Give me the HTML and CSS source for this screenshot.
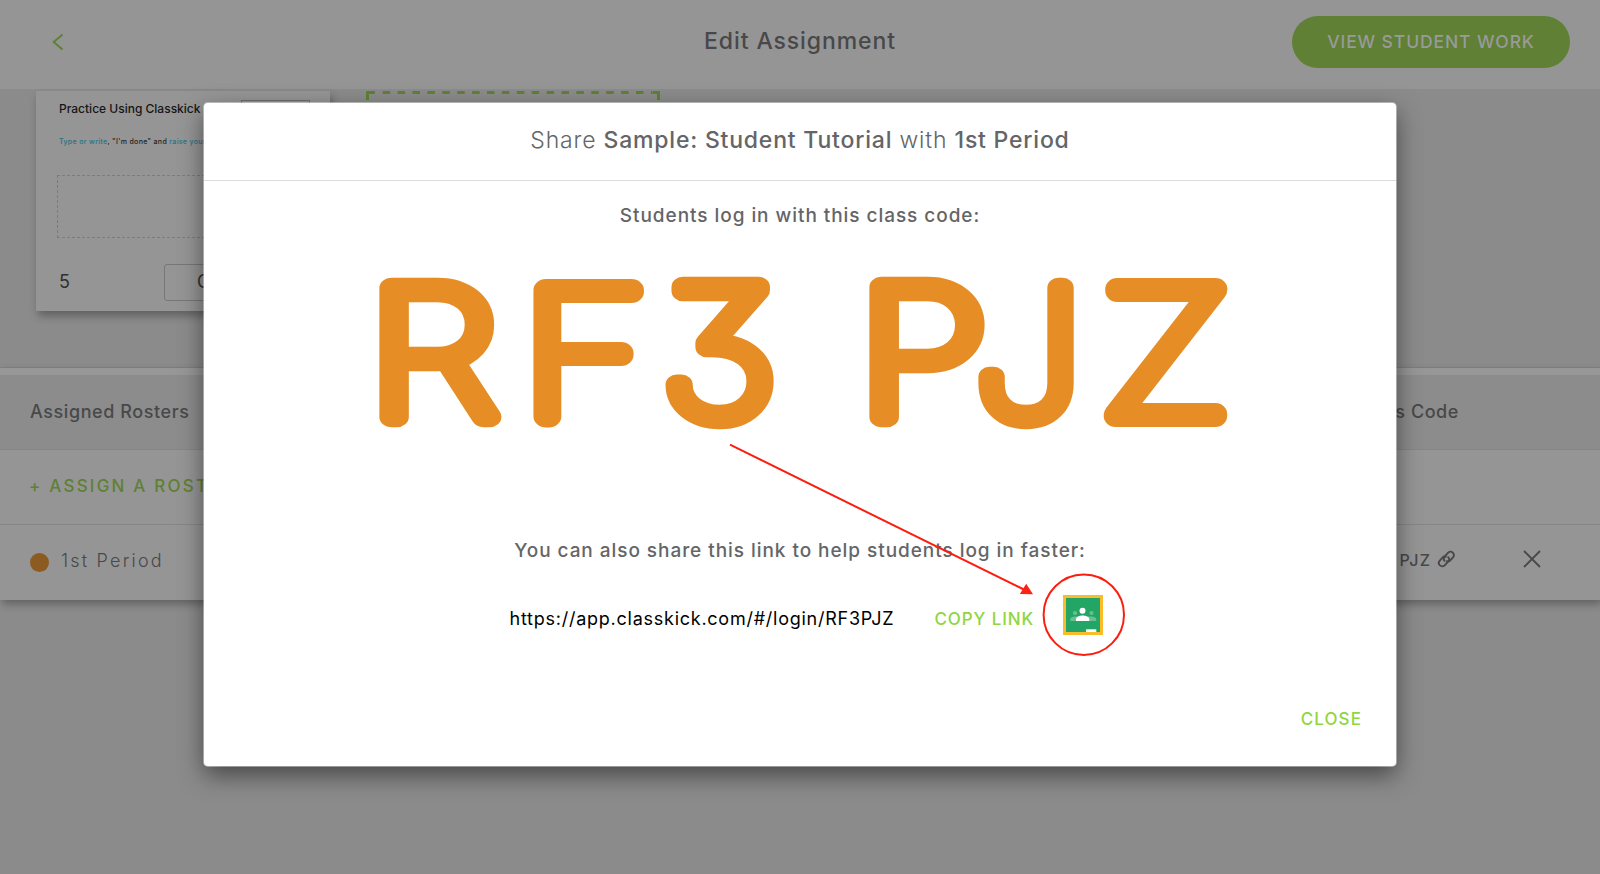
FILE: index.html
```
<!DOCTYPE html>
<html lang="en">
<head>
<meta charset="utf-8">
<title>Edit Assignment</title>
<link rel="stylesheet" href="styles.css">
</head>
<body>
<div class="page">
  <header class="topbar">
    <svg class="back" width="12" height="18" viewBox="0 0 12 18"><path d="M10.5 1.5 1.7 9l8.8 7.5"/></svg>
    <h1 class="topbar-title">Edit Assignment</h1>
    <button class="view-work">VIEW STUDENT WORK</button>
  </header>

  <section class="slides">
    <article class="slide">
      <div class="slide-head">
        <span>Practice Using Classkick</span>
        <span class="slide-name"></span>
      </div>
      <p class="slide-task"><em>Type or write</em>, "I'm done" and <em>raise your</em></p>
      <div class="slide-answer"></div>
      <div class="slide-foot">
        <span class="slide-number">5</span>
        <span class="slide-options">O</span>
      </div>
    </article>
    <svg class="add-slide" width="294" height="12" viewBox="0 0 294 12">
      <path d="M1.5 9V1.5H9"/>
      <path d="M16.7 1.5H286" stroke-dasharray="7.5 7.4"/>
      <path d="M286.5 1.5h6V9"/>
    </svg>
  </section>

  <section class="rosters">
    <div class="row row-head"><span>Assigned Rosters</span><span class="col-code">Class Code</span></div>
    <div class="row row-assign">+ ASSIGN A ROSTER</div>
    <div class="row row-item">
      <span class="dot"></span><span class="roster-name">1st Period</span>
      <span class="roster-code">RF3 PJZ</span>
      <svg class="link" width="19" height="18" viewBox="0 0 19 18"><path d="M7.6 10.8c-1.300-1.300-1.200-3 0-4.200l3.300-3.700c1.300-1.400 3.500-1.500 4.900-.3 1.400 1.300 1.500 3.400.2 4.800l-2.700 3c-.9 1-2.200 1.200-3.300.8"/><path d="M11.200 7.200c1.300 1.300 1.200 3 0 4.200l-3.300 3.700c-1.300 1.400-3.500 1.500-4.900.3-1.400-1.300-1.500-3.400-.2-4.800l2.700-3c.9-1 2.200-1.200 3.300-.8"/></svg>
      <svg class="remove" width="18" height="18" viewBox="0 0 18 18"><path d="M1 1l16 16M17 1 1 17"/></svg>
    </div>
  </section>
</div>

<div class="overlay">
  <div class="modal">
    <h2 class="modal-title">Share <b>Sample: Student Tutorial</b> with <b>1st Period</b></h2>
    <p class="hint">Students log in with this class code:</p>
    <svg class="code" width="1192" height="190" viewBox="204 260 1192 190">
      <text transform="translate(367.5 416.700) scale(1.200 1)">R</text>
      <text class="wide" transform="translate(522 416) scale(1.150 1)">F</text>
      <text transform="translate(661.500 416.700) scale(1.109 1)">3</text>
      <text transform="translate(857.500 416.700) scale(1.205 1)">P</text>
      <text transform="translate(974.500 416.700) scale(1.075 1)">J</text>
      <text class="wide" transform="translate(1107.500 416) scale(1.085 1)">Z</text>
    </svg>
    <p class="hint hint-link">You can also share this link to help students log in faster:</p>
    <div class="share">
      <span class="url">https://app.classkick.com/#/login/RF3PJZ</span>
      <button class="text-button copy">COPY LINK</button>
      <svg class="classroom" width="40" height="40" viewBox="0 0 40 40">
        <path fill="#fbbc2a" d="M0 0h40v40H0z"/>
        <path fill="#23a566" d="M3 3h34v34H3z"/>
        <g fill="#68c092"><circle cx="12" cy="18" r="2.100"/><circle cx="28.500" cy="18" r="2.100"/><path d="M7.300 26v-1.600c0-1.800 2.400-2.800 4.700-2.800h16.500c2.300 0 4.700 1 4.700 2.800V26z"/></g>
        <g fill="#fff"><circle cx="19.500" cy="15.700" r="3"/><path d="M13 26v-2c0-2.300 3.700-3.600 6.600-3.600s6.700 1.300 6.700 3.600v2z"/><path d="M23 34.300h10.300V37H23z"/></g>
      </svg>
    </div>
    <button class="text-button close">CLOSE</button>
  </div>
  <svg class="annotation" width="400" height="220" viewBox="728 440 400 220">
    <path d="M730 444.700 1024 589.500"/>
    <path class="tip" d="M1033 594.300l-13.200-.3 6.400-10.200z"/>
    <circle cx="1083.800" cy="614.700" r="40.200"/>
  </svg>
</div>
</body>
</html>
```
FILE: styles.css
```
* { box-sizing: border-box; }

body {
  margin: 0;
  background: #8b8b8b;
  font-family: Inter, "Liberation Sans", sans-serif;
  color: #48484a;
}

h1, h2, p { margin: 0; font-weight: 500; }
button { font: inherit; border: 0; padding: 0; background: none; }
svg { display: block; fill: none; }
.page { height: 874px; overflow: hidden; }

.topbar {
  display: grid;
  grid-template-columns: 278px 1fr 278px;
  align-items: center;
  height: 89px;
  padding: 0 30px 6px;
  background: #959595;
}
.back { margin-left: 22px; stroke: #5f8035; stroke-width: 2; }
.topbar-title { text-align: center; font-size: 23px; line-height: 30px; letter-spacing: .9px; padding-bottom: 1px; }
.view-work {
  height: 52px;
  border-radius: 26px;
  background: #5f8035;
  color: #9a9a9a;
  font-size: 17.5px;
  font-weight: 500;
  letter-spacing: .9px;
}

.slides { display: flex; gap: 36px; height: 279px; padding: 2px 36px 0; border-bottom: 1px solid #838383; }
.slide {
  width: 294px;
  height: 220px;
  padding: 9px 20px 0 21px;
  background: #959595;
  box-shadow: 2px 5px 8px rgba(0, 0, 0, .3);
}
.slide-head { display: flex; justify-content: space-between; padding-left: 2px; font-size: 12px; font-weight: 500; line-height: 18px; color: #151515; white-space: nowrap; }
.slide-name { width: 69px; height: 20px; border: 1px solid #6e6e6e; }
.slide-task { margin-top: 17px; padding-left: 2px; font-size: 7px; line-height: 10px; letter-spacing: .34px; color: #222; white-space: nowrap; }
.slide-task em { font-style: normal; color: #1d7488; }
.slide-answer { height: 63px; margin: 28px 0 0; border: 1px dashed #6f8d45; }
.slide-foot { display: flex; justify-content: space-between; margin-top: 26px; padding-left: 2px; line-height: 36px; font-size: 18px; color: #303030; }
.slide-options { width: 146px; height: 37px; padding-left: 32px; border: 1px solid #777; border-radius: 3px; line-height: 34px; }
.add-slide { stroke: #5f8035; stroke-width: 3; }

.rosters { border-top: 7px solid #979797; background: #959595; box-shadow: 2px 4px 8px rgba(0, 0, 0, .3); }
.row { display: flex; align-items: center; height: 75px; padding: 0 30px; border-bottom: 1px solid #868686; font-size: 18px; white-space: nowrap; }
.row-head { background: #8c8c8c; font-weight: 500; letter-spacing: .58px; padding-bottom: 1px; }
.col-code { margin-left: auto; margin-right: 111px; }
.row-assign { color: #5f8035; font-size: 17px; font-weight: 500; letter-spacing: 2.2px; padding: 0 30px 2px 29px; }
.row-item { border: 0; padding-bottom: 5px; }
.dot { width: 19px; height: 19px; border-radius: 50%; background: #8c5b22; margin: 4px 12px 0 0; }
.roster-name { font-weight: 300; letter-spacing: 2.2px; }
.roster-code { margin-left: auto; font-size: 16px; font-weight: 500; letter-spacing: 1.1px; }
.link { margin: 0 67px 3px 6px; stroke: #48484a; stroke-width: 1.9; stroke-linecap: round; }
.remove { margin: 0 29px 3px 0; stroke: #48484a; stroke-width: 1.8; }

.overlay { position: absolute; inset: 0; display: flex; justify-content: center; align-items: flex-start; padding-top: 103px; overflow: hidden; }
.modal {
  display: flex;
  flex-direction: column;
  align-items: center;
  width: 1192px;
  height: 663px;
  border-radius: 4px;
  background: #fff;
  color: #646567;
  box-shadow: 0 0 0 1px rgba(255, 255, 255, .4), 0 9px 24px rgba(0, 0, 0, .5);
}
.modal-title {
  width: 100%;
  height: 78px;
  border-bottom: 1px solid #dcdcdc;
  text-align: center;
  font-size: 23px;
  font-weight: 300;
  line-height: 74px;
  letter-spacing: .8px;
}
.modal-title b { font-weight: 500; }
.hint { margin-top: 20px; font-size: 19px; line-height: 30px; letter-spacing: .95px; }
.code { margin-top: 29px; flex: none; overflow: visible; }
.code text {
  font-size: 178px;
  font-weight: 100;
  font-feature-settings: "cv09";
  fill: #e68d25;
  stroke: #e68d25;
  stroke-width: 20.5px;
  stroke-linejoin: round;
}
.code .wide { font-family: Lato, Inter, sans-serif; font-size: 181px; stroke-width: 22px; }
.hint-link { margin-top: 86px; }
.share { display: flex; align-items: center; width: 593px; height: 40px; margin: 29px 0 0 12px; }
.url { color: #000; font-size: 18px; letter-spacing: .75px; padding-top: 7px; }
.text-button { color: #8fd640; font-size: 17px; font-weight: 500; letter-spacing: .9px; line-height: 24px; white-space: nowrap; }
.copy { margin-left: 40px; padding-top: 8px; }
.classroom { margin-left: auto; }
.close { margin: 72px 34px 0 auto; letter-spacing: 1.1px; }

.annotation { position: absolute; left: 728px; top: 440px; stroke: #fb1e0e; stroke-width: 2; }
.annotation .tip { fill: #fb2414; stroke: none; }
```
